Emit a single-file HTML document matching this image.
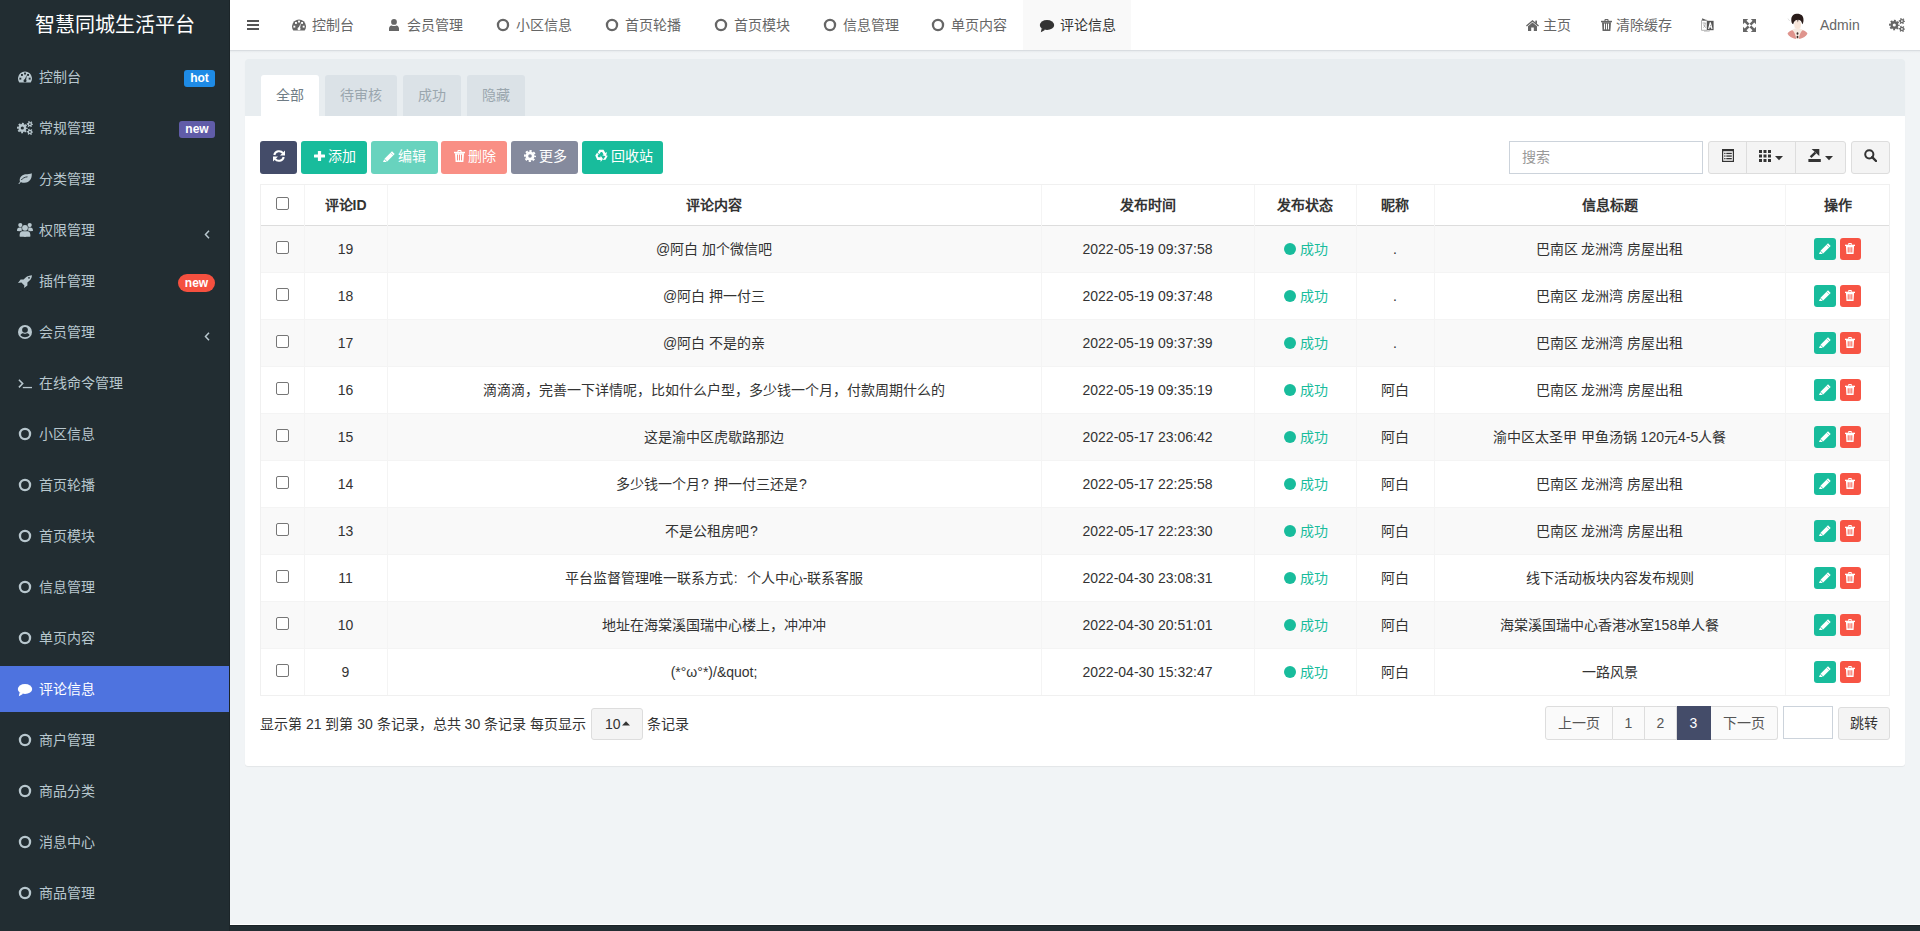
<!DOCTYPE html><html lang="zh-CN"><head><meta charset="utf-8"><title>评论信息</title><style>
*{box-sizing:border-box}
html,body{margin:0;padding:0}
body{width:1920px;height:931px;overflow:hidden;position:relative;background:#222d32;font-family:"Liberation Sans",sans-serif;font-size:14px;color:#333}
.a{position:absolute}
svg{display:block}
#logo{left:0;top:0;width:230px;height:50px;line-height:50px;text-align:center;color:#fff;font-size:20px}
.mi{left:0;width:230px;height:46px;color:#b8c7ce}
.mi .tx{left:39px;top:0;line-height:46px;white-space:nowrap}
.mi.act{background:#4e73df;color:#fff}
.badge{color:#fff;font-weight:bold;font-size:12px;line-height:17px;height:17px;text-align:center;border-radius:3px}
.tx50{top:0;line-height:50px;white-space:nowrap;color:#666}
.tab{top:75px;height:41px;line-height:41px;text-align:center;background:#dbe2e7;color:#9aa6ae;border-radius:3px 3px 0 0}
.tab.act{background:#fff;color:#6f7c85}
.btn{top:141px;height:33px;border-radius:3px}
.btx{top:141px;line-height:31px;color:#fff;white-space:nowrap}
.cell{position:absolute;text-align:center;white-space:nowrap;overflow:hidden;line-height:46px}
.vl{position:absolute;width:1px;background:#f4f4f4}
.hl{position:absolute;height:1px;background:#f4f4f4}
.pg{top:706px;height:34px;line-height:33px;text-align:center;background:#fafafa;color:#555;border:1px solid #ddd;border-left:none}
.fw{display:inline-block;width:14px;text-align:left;padding-left:1px}
.cb{position:absolute;width:13px;height:13px;border:1px solid #767676;border-radius:2px;background:#fff}
</style></head><body>
<div class="a" style="left:0;top:0;width:230px;height:931px;background:#222d32"></div>
<div id="logo" class="a">智慧同城生活平台</div>
<div class="a mi" style="top:54px">
<div class="a" style="left:18px;top:17px"><svg width="14" height="12" viewBox="0 0 14 12"><path d="M1.3 11.6 A7 7 0 1 1 12.7 11.6 Z" fill="#b8c7ce"/><rect x="1.4" y="6.7" width="1.9" height="1.9" fill="#222d32"/><rect x="3.0" y="3.0" width="1.9" height="1.9" fill="#222d32"/><rect x="6.05" y="1.6" width="1.9" height="1.9" fill="#222d32"/><rect x="9.1" y="3.0" width="1.9" height="1.9" fill="#222d32"/><rect x="10.7" y="6.7" width="1.9" height="1.9" fill="#222d32"/><path d="M9.0 3.7 L8.0 9.3 L6.3 9.3 Z" fill="#222d32"/><circle cx="7" cy="9.7" r="1.5" fill="#222d32"/></svg></div><div class="a tx">控制台</div>
<div class="a badge" style="left:184px;top:16px;width:31px;background:#1e8be6">hot</div>
</div>
<div class="a mi" style="top:105px">
<div class="a" style="left:17px;top:16px"><svg width="16" height="14" viewBox="0 0 16 14"><circle cx="5.3" cy="7" r="3.9" fill="#b8c7ce"/><circle cx="5.3" cy="7" r="4.400" fill="none" stroke="#b8c7ce" stroke-width="1.800" stroke-dasharray="1.901 1.555" stroke-dashoffset="0.950"/><circle cx="5.3" cy="7" r="1.6" fill="#222d32"/><circle cx="12.9" cy="3.1" r="2.2" fill="#b8c7ce"/><circle cx="12.9" cy="3.1" r="2.450" fill="none" stroke="#b8c7ce" stroke-width="1.300" stroke-dasharray="1.283 1.283" stroke-dashoffset="0.641"/><circle cx="12.9" cy="3.1" r="0.9" fill="#222d32"/><circle cx="12.9" cy="10.9" r="2.2" fill="#b8c7ce"/><circle cx="12.9" cy="10.9" r="2.450" fill="none" stroke="#b8c7ce" stroke-width="1.300" stroke-dasharray="1.283 1.283" stroke-dashoffset="0.641"/><circle cx="12.9" cy="10.9" r="0.9" fill="#222d32"/></svg></div><div class="a tx">常规管理</div>
<div class="a badge" style="left:179px;top:16px;width:36px;background:#605ca8">new</div>
</div>
<div class="a mi" style="top:156px">
<div class="a" style="left:18px;top:17px"><svg width="14" height="11" viewBox="0 0 14 11"><path d="M0.3 10.6 L2 9 C0.8 5 3.5 1.8 7.5 1.3 C10 1 12 1 13.7 0.2 C14.2 4.5 12.5 9.6 6.5 9.8 C4.5 9.9 3.3 9.5 2.6 9.3 L1.3 10.9 Z" fill="#b8c7ce"/><path d="M3.2 7 C4.5 5.5 6.5 4 9.5 3.8" fill="none" stroke="#222d32" stroke-width="0.9"/></svg></div><div class="a tx">分类管理</div>
</div>
<div class="a mi" style="top:207px">
<div class="a" style="left:17px;top:16px"><svg width="16" height="14" viewBox="0 0 16 14"><circle cx="3.3" cy="2.1" r="2.1" fill="#b8c7ce"/><circle cx="12.7" cy="2.1" r="2.1" fill="#b8c7ce"/><path d="M0 8 C0 5.5 1 4.6 2.6 4.6 L4.8 4.6 C4.5 5.5 4.6 6.6 5.2 7.6 C4.4 7.7 3.5 8 3 8.2 Z" fill="#b8c7ce"/><path d="M16 8 C16 5.5 15 4.6 13.4 4.6 L11.2 4.6 C11.5 5.5 11.4 6.6 10.8 7.6 C11.6 7.7 12.5 8 13 8.2 Z" fill="#b8c7ce"/><circle cx="8" cy="4.8" r="2.9" fill="#b8c7ce"/><path d="M2.6 13.6 C2.5 9.5 3.8 8.3 5.8 8.3 L10.2 8.3 C12.2 8.3 13.5 9.5 13.4 13.6 C12 14 4 14 2.6 13.6 Z" fill="#b8c7ce"/></svg></div><div class="a tx">权限管理</div>
<div class="a" style="left:204px;top:23px"><svg width="6" height="9" viewBox="0 0 6 9"><path d="M5 0.8 L1.5 4.5 L5 8.2" fill="none" stroke="#b8c7ce" stroke-width="1.5"/></svg></div>
</div>
<div class="a mi" style="top:258px">
<div class="a" style="left:18px;top:17px"><svg width="14" height="13" viewBox="0 0 14 13"><path d="M14 0.2 C10 0.3 7.5 2.2 5.6 4.6 L2.6 4.6 L0 7.9 L3.4 7.6 L6.4 10.6 L6 13 L9.4 10.4 L9.4 7.4 C11.9 5.5 13.9 3.5 14 0.2 Z" fill="#b8c7ce"/><circle cx="11" cy="2.8" r="0.9" fill="#222d32"/></svg></div><div class="a tx">插件管理</div>
<div class="a badge" style="left:178px;top:16px;width:37px;background:#f5503f;border-radius:9px;height:18px;line-height:18px;top:16px">new</div>
</div>
<div class="a mi" style="top:309px">
<div class="a" style="left:18px;top:16px"><svg width="14" height="14" viewBox="0 0 14 14"><circle cx="7" cy="7" r="7" fill="#b8c7ce"/><circle cx="7" cy="4.8" r="2.9" fill="#222d32"/><path d="M2.4 10.3 C3 8.6 4 8.2 5.2 8.2 C5.8 8.6 6.4 8.7 7 8.7 C7.6 8.7 8.2 8.6 8.8 8.2 C10 8.2 11 8.6 11.6 10.3 C10.5 11.6 8.8 12.2 7 12.2 C5.2 12.2 3.5 11.6 2.4 10.3 Z" fill="#222d32"/></svg></div><div class="a tx">会员管理</div>
<div class="a" style="left:204px;top:23px"><svg width="6" height="9" viewBox="0 0 6 9"><path d="M5 0.8 L1.5 4.5 L5 8.2" fill="none" stroke="#b8c7ce" stroke-width="1.5"/></svg></div>
</div>
<div class="a mi" style="top:360px">
<div class="a" style="left:18px;top:19px"><svg width="14" height="10" viewBox="0 0 14 10"><path d="M0.9 0.8 L4.7 4.6 L0.9 8.4" fill="none" stroke="#b8c7ce" stroke-width="1.5"/><rect x="4.8" y="7.9" width="9.2" height="1.3" fill="#b8c7ce"/></svg></div><div class="a tx">在线命令管理</div>
</div>
<div class="a mi" style="top:411px">
<div class="a" style="left:18px;top:16px"><svg width="14" height="14" viewBox="0 0 14 14"><circle cx="7" cy="7" r="5.05" fill="none" stroke="#b8c7ce" stroke-width="2.3"/></svg></div><div class="a tx">小区信息</div>
</div>
<div class="a mi" style="top:462px">
<div class="a" style="left:18px;top:16px"><svg width="14" height="14" viewBox="0 0 14 14"><circle cx="7" cy="7" r="5.05" fill="none" stroke="#b8c7ce" stroke-width="2.3"/></svg></div><div class="a tx">首页轮播</div>
</div>
<div class="a mi" style="top:513px">
<div class="a" style="left:18px;top:16px"><svg width="14" height="14" viewBox="0 0 14 14"><circle cx="7" cy="7" r="5.05" fill="none" stroke="#b8c7ce" stroke-width="2.3"/></svg></div><div class="a tx">首页模块</div>
</div>
<div class="a mi" style="top:564px">
<div class="a" style="left:18px;top:16px"><svg width="14" height="14" viewBox="0 0 14 14"><circle cx="7" cy="7" r="5.05" fill="none" stroke="#b8c7ce" stroke-width="2.3"/></svg></div><div class="a tx">信息管理</div>
</div>
<div class="a mi" style="top:615px">
<div class="a" style="left:18px;top:16px"><svg width="14" height="14" viewBox="0 0 14 14"><circle cx="7" cy="7" r="5.05" fill="none" stroke="#b8c7ce" stroke-width="2.3"/></svg></div><div class="a tx">单页内容</div>
</div>
<div class="a mi act" style="top:666px">
<div class="a" style="left:17px;top:17px"><svg width="16" height="14" viewBox="0 0 16 14"><ellipse cx="8" cy="6" rx="7.2" ry="5.1" fill="#fff"/><path d="M2.8 9 L1.8 13.2 C3.6 12.6 5 11.8 6.2 10.8 Z" fill="#fff"/></svg></div><div class="a tx">评论信息</div>
</div>
<div class="a mi" style="top:717px">
<div class="a" style="left:18px;top:16px"><svg width="14" height="14" viewBox="0 0 14 14"><circle cx="7" cy="7" r="5.05" fill="none" stroke="#b8c7ce" stroke-width="2.3"/></svg></div><div class="a tx">商户管理</div>
</div>
<div class="a mi" style="top:768px">
<div class="a" style="left:18px;top:16px"><svg width="14" height="14" viewBox="0 0 14 14"><circle cx="7" cy="7" r="5.05" fill="none" stroke="#b8c7ce" stroke-width="2.3"/></svg></div><div class="a tx">商品分类</div>
</div>
<div class="a mi" style="top:819px">
<div class="a" style="left:18px;top:16px"><svg width="14" height="14" viewBox="0 0 14 14"><circle cx="7" cy="7" r="5.05" fill="none" stroke="#b8c7ce" stroke-width="2.3"/></svg></div><div class="a tx">消息中心</div>
</div>
<div class="a mi" style="top:870px">
<div class="a" style="left:18px;top:16px"><svg width="14" height="14" viewBox="0 0 14 14"><circle cx="7" cy="7" r="5.05" fill="none" stroke="#b8c7ce" stroke-width="2.3"/></svg></div><div class="a tx">商品管理</div>
</div>
<div class="a" style="left:229px;top:0;width:1px;height:931px;background:#1c2529"></div>
<div class="a" style="left:230px;top:0;width:1690px;height:50px;background:#fff"></div>
<div class="a" style="left:247px;top:20px"><svg width="12" height="10" viewBox="0 0 12 10"><rect x="0" y="0" width="12" height="2" fill="#555"/><rect x="0" y="4" width="12" height="2" fill="#555"/><rect x="0" y="8" width="12" height="2" fill="#555"/></svg></div>
<div class="a" style="left:292px;top:19px"><svg width="14" height="12" viewBox="0 0 14 12"><path d="M1.3 11.6 A7 7 0 1 1 12.7 11.6 Z" fill="#666"/><rect x="1.4" y="6.7" width="1.9" height="1.9" fill="#fff"/><rect x="3.0" y="3.0" width="1.9" height="1.9" fill="#fff"/><rect x="6.05" y="1.6" width="1.9" height="1.9" fill="#fff"/><rect x="9.1" y="3.0" width="1.9" height="1.9" fill="#fff"/><rect x="10.7" y="6.7" width="1.9" height="1.9" fill="#fff"/><path d="M9.0 3.7 L8.0 9.3 L6.3 9.3 Z" fill="#fff"/><circle cx="7" cy="9.7" r="1.5" fill="#fff"/></svg></div>
<div class="a tx50" style="left:312px;">控制台</div>
<div class="a" style="left:389px;top:19px"><svg width="10" height="12" viewBox="0 0 10 12"><circle cx="5" cy="2.9" r="2.9" fill="#666"/><path d="M0 12 L0 9.6 C0 7.7 1.1 6.6 2.6 6.4 C3.3 6.9 4.1 7.1 5 7.1 C5.9 7.1 6.7 6.9 7.4 6.4 C8.9 6.6 10 7.7 10 9.6 L10 12 Z" fill="#666"/></svg></div>
<div class="a tx50" style="left:407px;">会员管理</div>
<div class="a" style="left:496px;top:18px"><svg width="14" height="14" viewBox="0 0 14 14"><circle cx="7" cy="7" r="5.05" fill="none" stroke="#666" stroke-width="2.3"/></svg></div>
<div class="a tx50" style="left:516px;">小区信息</div>
<div class="a" style="left:605px;top:18px"><svg width="14" height="14" viewBox="0 0 14 14"><circle cx="7" cy="7" r="5.05" fill="none" stroke="#666" stroke-width="2.3"/></svg></div>
<div class="a tx50" style="left:625px;">首页轮播</div>
<div class="a" style="left:714px;top:18px"><svg width="14" height="14" viewBox="0 0 14 14"><circle cx="7" cy="7" r="5.05" fill="none" stroke="#666" stroke-width="2.3"/></svg></div>
<div class="a tx50" style="left:734px;">首页模块</div>
<div class="a" style="left:823px;top:18px"><svg width="14" height="14" viewBox="0 0 14 14"><circle cx="7" cy="7" r="5.05" fill="none" stroke="#666" stroke-width="2.3"/></svg></div>
<div class="a tx50" style="left:843px;">信息管理</div>
<div class="a" style="left:931px;top:18px"><svg width="14" height="14" viewBox="0 0 14 14"><circle cx="7" cy="7" r="5.05" fill="none" stroke="#666" stroke-width="2.3"/></svg></div>
<div class="a tx50" style="left:951px;">单页内容</div>
<div class="a" style="left:1023px;top:0;width:108px;height:50px;background:#f9f9f9"></div>
<div class="a" style="left:1039px;top:19px"><svg width="16" height="14" viewBox="0 0 16 14"><ellipse cx="8" cy="6" rx="7.2" ry="5.1" fill="#333"/><path d="M2.8 9 L1.8 13.2 C3.6 12.6 5 11.8 6.2 10.8 Z" fill="#333"/></svg></div>
<div class="a tx50" style="left:1060px;color:#333">评论信息</div>
<div class="a" style="left:1526px;top:20px"><svg width="13" height="11" viewBox="0 0 13 11"><path d="M6.5 0 L13 5.5 L12.1 6.5 L6.5 1.8 L0.9 6.5 L0 5.5 Z" fill="#666"/><path d="M2 6.2 L6.5 2.5 L11 6.2 L11 11 L7.8 11 L7.8 7.6 L5.2 7.6 L5.2 11 L2 11 Z" fill="#666"/><rect x="9.3" y="0.6" width="1.7" height="3.2" fill="#666"/></svg></div>
<div class="a tx50" style="left:1543px">主页</div>
<div class="a" style="left:1601px;top:19px"><svg width="11" height="12" viewBox="0 0 11 12"><rect x="0" y="1.8" width="11" height="1.5" fill="#666"/><path d="M3.3 2 L3.8 0 L7.2 0 L7.7 2 L6.6 2 L6.3 1 L4.7 1 L4.4 2 Z" fill="#666"/><path d="M1 3.3 L10 3.3 L9.4 12 L1.6 12 Z" fill="#666"/><rect x="3" y="4.6" width="1" height="5.8" fill="#fff"/><rect x="5" y="4.6" width="1" height="5.8" fill="#fff"/><rect x="7" y="4.6" width="1" height="5.8" fill="#fff"/></svg></div>
<div class="a tx50" style="left:1616px">清除缓存</div>
<div class="a" style="left:1701px;top:18px"><svg width="13" height="14" viewBox="0 0 13 14"><path d="M0.5 2.2 L6 2.2 L6 12.3 L0.5 12.3 Z" fill="#fff" stroke="#aaa" stroke-width="0.9"/><path d="M6 2.8 L12.6 2.8 L12.6 12.2 L6 12.2 Z" fill="#555"/><path d="M7.6 11 L9.3 4.4 L11 11 M8.2 8.9 L10.4 8.9" stroke="#fff" stroke-width="1.1" fill="none"/><path d="M1.6 5 L4.6 5 M2.5 9.5 C3.8 8.5 4.2 7 4.2 5 M2.6 6.5 C3 8 4 9 5 9.6" stroke="#999" stroke-width="0.8" fill="none"/><path d="M1.2 0.2 L6 2.6 L1.2 2.6 Z" fill="#555"/><path d="M3 13.2 L8.4 13.2 L8.4 12.2" stroke="#aaa" stroke-width="0.7" fill="none"/></svg></div>
<div class="a" style="left:1743px;top:19px"><svg width="13" height="13" viewBox="0 0 13 13"><path d="M0 0 L5.2 0 L3.5 1.7 L6.5 4.7 L4.7 6.5 L1.7 3.5 L0 5.2 Z M13 0 L13 5.2 L11.3 3.5 L8.3 6.5 L6.5 4.7 L9.5 1.7 L7.8 0 Z M0 13 L0 7.8 L1.7 9.5 L4.7 6.5 L6.5 8.3 L3.5 11.3 L5.2 13 Z M13 13 L7.8 13 L9.5 11.3 L6.5 8.3 L8.3 6.5 L11.3 9.5 L13 7.8 Z" fill="#666"/></svg></div>
<div class="a" style="left:1785px;top:13px;width:25px;height:26px;border-radius:50%;overflow:hidden"><svg width="25" height="26" viewBox="0 0 25 26"><g><path d="M6 18 C8 15.8 10 15.2 12.5 15.2 C15 15.2 17 15.8 19 18 L17 26 L8 26 Z" fill="#f6ebe2"/><path d="M1.2 26 C1.2 21 3.5 18 7.5 17.3 C9 18.5 10.5 21 11.2 26 Z" fill="#df948d"/><path d="M23.8 26 C23.8 21 21.5 18 17.5 17.3 C16 18.5 14.5 21 13.8 26 Z" fill="#df948d"/><ellipse cx="12.6" cy="11.5" rx="3.4" ry="4.6" fill="#f8e6da"/><path d="M6.3 7.5 C6 2.5 9 0.8 12.4 0.8 C16 0.8 18.8 2.8 18.5 7.5 C18.4 9.5 17.8 10.8 17.2 11.2 C16.8 8.5 15.6 7.2 13.4 6.8 L12.9 9.5 L12.3 6.8 C10 7.2 8.8 8.8 8.2 11.2 C7 10.8 6.4 9.5 6.3 7.5 Z" fill="#2a1c1a"/><ellipse cx="12.5" cy="20.5" rx="0.9" ry="1.3" fill="#3a2a26"/><ellipse cx="12.5" cy="24" rx="0.9" ry="1.3" fill="#3a2a26"/><path d="M2.8 5.5 L4.8 8" stroke="#cfcfcf" stroke-width="0.6"/></g></svg></div>
<div class="a tx50" style="left:1820px">Admin</div>
<div class="a" style="left:1889px;top:18px"><svg width="16" height="14" viewBox="0 0 16 14"><circle cx="5.3" cy="7" r="3.9" fill="#666"/><circle cx="5.3" cy="7" r="4.400" fill="none" stroke="#666" stroke-width="1.800" stroke-dasharray="1.901 1.555" stroke-dashoffset="0.950"/><circle cx="5.3" cy="7" r="1.6" fill="#fff"/><circle cx="12.9" cy="3.1" r="2.2" fill="#666"/><circle cx="12.9" cy="3.1" r="2.450" fill="none" stroke="#666" stroke-width="1.300" stroke-dasharray="1.283 1.283" stroke-dashoffset="0.641"/><circle cx="12.9" cy="3.1" r="0.9" fill="#fff"/><circle cx="12.9" cy="10.9" r="2.2" fill="#666"/><circle cx="12.9" cy="10.9" r="2.450" fill="none" stroke="#666" stroke-width="1.300" stroke-dasharray="1.283 1.283" stroke-dashoffset="0.641"/><circle cx="12.9" cy="10.9" r="0.9" fill="#fff"/></svg></div>
<div class="a" style="left:230px;top:50px;width:1690px;height:1px;background:#d9dde1"></div>
<div class="a" style="left:230px;top:51px;width:1690px;height:873px;background:#f1f4f6"></div>
<div class="a" style="left:230px;top:51px;width:1690px;height:2px;background:linear-gradient(#e6eaed,#f1f4f6)"></div>
<div class="a" style="left:230px;top:924px;width:1690px;height:1px;background:#fff"></div>
<div class="a" style="left:230px;top:925px;width:1690px;height:1px;background:#1a2226"></div>
<div class="a" style="left:245px;top:59px;width:1660px;height:707px;background:#fff;border-radius:3px;box-shadow:0 1px 1px rgba(0,0,0,.06)"></div>
<div class="a" style="left:245px;top:59px;width:1660px;height:57px;background:#e8edf0;border-radius:3px 3px 0 0"></div>
<div class="a tab act" style="left:261px;width:58px">全部</div>
<div class="a tab" style="left:325px;width:72px">待审核</div>
<div class="a tab" style="left:403px;width:58px">成功</div>
<div class="a tab" style="left:467px;width:58px">隐藏</div>
<div class="a" style="left:260px;top:141px;width:37px;height:33px;opacity:1">
<div class="a btn" style="left:0;top:0;width:37px;background:#444c69"></div>
<div class="a" style="left:13px;top:9px"><svg width="12" height="12" viewBox="0 0 12 12"><path d="M10 3.2 A4.9 4.9 0 0 0 1.3 5" fill="none" stroke="#fff" stroke-width="2.1"/><path d="M12 0.4 L12 5.4 L7 5.4 Z" fill="#fff"/><path d="M2 8.8 A4.9 4.9 0 0 0 10.7 7" fill="none" stroke="#fff" stroke-width="2.1"/><path d="M0 11.6 L0 6.6 L5 6.6 Z" fill="#fff"/></svg></div>
</div>
<div class="a" style="left:301px;top:141px;width:66px;height:33px;opacity:1">
<div class="a btn" style="left:0;top:0;width:66px;background:#18bc9c"></div>
<div class="a" style="left:13px;top:10px"><svg width="11" height="10" viewBox="0 0 11 10"><rect x="3.9" y="0" width="3.2" height="10" rx="0.5" fill="#fff"/><rect x="0" y="3.4" width="11" height="3.2" rx="0.5" fill="#fff"/></svg></div>
<div class="a btx" style="left:27px;top:0">添加</div>
</div>
<div class="a" style="left:371px;top:141px;width:67px;height:33px;opacity:0.65">
<div class="a btn" style="left:0;top:0;width:67px;background:#18bc9c"></div>
<div class="a" style="left:12px;top:10px"><svg width="12" height="11" viewBox="0 0 12 11"><path d="M9 0.3 L11.7 3 L4.2 10.5 L1.5 7.8 Z" fill="#fff"/><path d="M1.2 8.3 L3.8 10.9 L0 11 Z" fill="#fff"/><path d="M7.6 1.7 L10.3 4.4" stroke="#18bc9c" stroke-width="0.5"/></svg></div>
<div class="a btx" style="left:27px;top:0">编辑</div>
</div>
<div class="a" style="left:441px;top:141px;width:66px;height:33px;opacity:0.65">
<div class="a btn" style="left:0;top:0;width:66px;background:#f75444"></div>
<div class="a" style="left:13px;top:9px"><svg width="11" height="12" viewBox="0 0 11 12"><rect x="0" y="1.8" width="11" height="1.5" fill="#fff"/><path d="M3.3 2 L3.8 0 L7.2 0 L7.7 2 L6.6 2 L6.3 1 L4.7 1 L4.4 2 Z" fill="#fff"/><path d="M1 3.3 L10 3.3 L9.4 12 L1.6 12 Z" fill="#fff"/><rect x="3" y="4.6" width="1" height="5.8" fill="#f75444"/><rect x="5" y="4.6" width="1" height="5.8" fill="#f75444"/><rect x="7" y="4.6" width="1" height="5.8" fill="#f75444"/></svg></div>
<div class="a btx" style="left:27px;top:0">删除</div>
</div>
<div class="a" style="left:511px;top:141px;width:67px;height:33px;opacity:0.65">
<div class="a btn" style="left:0;top:0;width:67px;background:#444c69"></div>
<div class="a" style="left:13px;top:9px"><svg width="12" height="12" viewBox="0 0 12 12"><circle cx="6" cy="6" r="4.5" fill="#fff"/><circle cx="6" cy="6" r="5.050" fill="none" stroke="#fff" stroke-width="1.900" stroke-dasharray="2.181 1.785" stroke-dashoffset="1.091"/><circle cx="6" cy="6" r="1.8" fill="#444c69"/></svg></div>
<div class="a btx" style="left:28px;top:0">更多</div>
</div>
<div class="a" style="left:582px;top:141px;width:81px;height:33px;opacity:1">
<div class="a btn" style="left:0;top:0;width:81px;background:#18bc9c"></div>
<div class="a" style="left:13px;top:8px"><svg width="13" height="13" viewBox="0 0 13 13"><path d="M4.3 0.8 L8.5 0.8 L10.4 4 L12 3.1 L11 7.2 L7.1 6.3 L8.6 5.4 L7.1 2.9 L5.8 2.9 L4.6 4.9 L2.7 3.8 Z" fill="#fff"/><path d="M0.3 6.6 L1.9 3.9 L3.8 5 L2.6 7 L3.4 8.3 L5.6 8.3 L5.6 6.6 L8 10 L5.6 13 L5.6 11 L2.3 11 Z" fill="#fff"/><path d="M12.7 6.8 L10.6 10.8 L7.8 11 L9.6 8.6 L10.5 7 L9 6 Z" fill="#fff"/></svg></div>
<div class="a btx" style="left:29px;top:0">回收站</div>
</div>
<div class="a" style="left:1509px;top:141px;width:194px;height:33px;border:1px solid #ccd3db;background:#fff"></div>
<div class="a" style="left:1522px;top:141px;line-height:32px;color:#999">搜索</div>
<div class="a" style="left:1708px;top:141px;width:138px;height:33px;border:1px solid #ddd;border-radius:3px;background:#f4f4f4"></div>
<div class="a" style="left:1746px;top:142px;width:1px;height:31px;background:#ddd"></div>
<div class="a" style="left:1795px;top:142px;width:1px;height:31px;background:#ddd"></div>
<div class="a" style="left:1722px;top:149px"><svg width="12" height="13" viewBox="0 0 12 13"><rect x="0.6" y="0.6" width="10.8" height="11.8" fill="none" stroke="#333" stroke-width="1.2"/><rect x="0.6" y="0.6" width="10.8" height="1.6" fill="#333"/><rect x="2.2" y="3.8" width="1.3" height="1.3" fill="#333"/><rect x="4.3" y="3.8" width="5.5" height="1.3" fill="#333"/><rect x="2.2" y="6.4" width="1.3" height="1.3" fill="#333"/><rect x="4.3" y="6.4" width="5.5" height="1.3" fill="#333"/><rect x="2.2" y="9" width="1.3" height="1.3" fill="#333"/><rect x="4.3" y="9" width="5.5" height="1.3" fill="#333"/></svg></div>
<div class="a" style="left:1759px;top:150px"><svg width="12" height="12" viewBox="0 0 12 12"><rect x="0" y="0" width="3" height="3" fill="#333"/><rect x="4.5" y="0" width="3" height="3" fill="#333"/><rect x="9" y="0" width="3" height="3" fill="#333"/><rect x="0" y="4.5" width="3" height="3" fill="#333"/><rect x="4.5" y="4.5" width="3" height="3" fill="#333"/><rect x="9" y="4.5" width="3" height="3" fill="#333"/><rect x="0" y="9" width="3" height="3" fill="#333"/><rect x="4.5" y="9" width="3" height="3" fill="#333"/><rect x="9" y="9" width="3" height="3" fill="#333"/></svg></div>
<div class="a" style="left:1775px;top:156px"><svg width="8" height="5" viewBox="0 0 8 5"><path d="M0 0 L8 0 L4 4.2 Z" fill="#333"/></svg></div>
<div class="a" style="left:1808px;top:148px"><svg width="13" height="14" viewBox="0 0 13 14"><rect x="0.4" y="11" width="12.4" height="3" fill="#333"/><path d="M3.6 0.9 L11.3 0.9 L11.3 8 Z" fill="#333"/><path d="M2.6 9.2 L7.4 4.6" stroke="#333" stroke-width="2.4"/></svg></div>
<div class="a" style="left:1825px;top:156px"><svg width="8" height="5" viewBox="0 0 8 5"><path d="M0 0 L8 0 L4 4.2 Z" fill="#333"/></svg></div>
<div class="a" style="left:1851px;top:141px;width:39px;height:33px;border:1px solid #ddd;border-radius:3px;background:#f4f4f4"></div>
<div class="a" style="left:1864px;top:149px"><svg width="13" height="13" viewBox="0 0 13 13"><circle cx="5.3" cy="5.3" r="4.1" fill="none" stroke="#333" stroke-width="2"/><path d="M8.2 8.2 L12 12" stroke="#333" stroke-width="2.4" stroke-linecap="round"/></svg></div>
<div class="a" style="left:260px;top:184px;width:1630px;height:512px;border:1px solid #f0f0f0;background:#fff"></div>
<div class="a" style="left:261px;top:226px;width:1628px;height:46px;background:#f9f9f9"></div>
<div class="hl" style="left:261px;top:272px;width:1628px"></div>
<div class="hl" style="left:261px;top:319px;width:1628px"></div>
<div class="a" style="left:261px;top:320px;width:1628px;height:46px;background:#f9f9f9"></div>
<div class="hl" style="left:261px;top:366px;width:1628px"></div>
<div class="hl" style="left:261px;top:413px;width:1628px"></div>
<div class="a" style="left:261px;top:414px;width:1628px;height:46px;background:#f9f9f9"></div>
<div class="hl" style="left:261px;top:460px;width:1628px"></div>
<div class="hl" style="left:261px;top:507px;width:1628px"></div>
<div class="a" style="left:261px;top:508px;width:1628px;height:46px;background:#f9f9f9"></div>
<div class="hl" style="left:261px;top:554px;width:1628px"></div>
<div class="hl" style="left:261px;top:601px;width:1628px"></div>
<div class="a" style="left:261px;top:602px;width:1628px;height:46px;background:#f9f9f9"></div>
<div class="hl" style="left:261px;top:648px;width:1628px"></div>
<div class="hl" style="left:261px;top:225px;width:1628px;background:#ddd"></div>
<div class="vl" style="left:304px;top:185px;height:510px"></div>
<div class="vl" style="left:387px;top:185px;height:510px"></div>
<div class="vl" style="left:1041px;top:185px;height:510px"></div>
<div class="vl" style="left:1254px;top:185px;height:510px"></div>
<div class="vl" style="left:1356px;top:185px;height:510px"></div>
<div class="vl" style="left:1434px;top:185px;height:510px"></div>
<div class="vl" style="left:1785px;top:185px;height:510px"></div>
<div class="cb" style="left:276px;top:197px"></div>
<div class="cell" style="left:304px;top:185px;width:83px;line-height:40px;font-weight:bold">评论ID</div>
<div class="cell" style="left:387px;top:185px;width:654px;line-height:40px;font-weight:bold">评论内容</div>
<div class="cell" style="left:1041px;top:185px;width:213px;line-height:40px;font-weight:bold">发布时间</div>
<div class="cell" style="left:1254px;top:185px;width:102px;line-height:40px;font-weight:bold">发布状态</div>
<div class="cell" style="left:1356px;top:185px;width:78px;line-height:40px;font-weight:bold">昵称</div>
<div class="cell" style="left:1434px;top:185px;width:351px;line-height:40px;font-weight:bold">信息标题</div>
<div class="cell" style="left:1785px;top:185px;width:105px;line-height:40px;font-weight:bold">操作</div>
<div class="cb" style="left:276px;top:241px"></div>
<div class="cell" style="left:304px;top:226px;width:83px">19</div>
<div class="cell" style="left:387px;top:226px;width:654px">@阿白 加个微信吧</div>
<div class="cell" style="left:1041px;top:226px;width:213px">2022-05-19 09:37:58</div>
<div class="cell" style="left:1356px;top:226px;width:78px">.</div>
<div class="cell" style="left:1434px;top:226px;width:351px">巴南区 龙洲湾 房屋出租</div>
<div class="a" style="left:1284px;top:243px"><svg width="12" height="12" viewBox="0 0 12 12"><circle cx="6" cy="6" r="6" fill="#18bc9c"/></svg></div>
<div class="a" style="left:1300px;top:226px;line-height:46px;color:#18bc9c">成功</div>
<div class="a" style="left:1814px;top:238px;width:22px;height:22px;background:#18bc9c;border-radius:3px"></div>
<div class="a" style="left:1819px;top:243px"><svg width="12" height="11" viewBox="0 0 12 11"><path d="M9 0.3 L11.7 3 L4.2 10.5 L1.5 7.8 Z" fill="#fff"/><path d="M1.2 8.3 L3.8 10.9 L0 11 Z" fill="#fff"/><path d="M7.6 1.7 L10.3 4.4" stroke="#18bc9c" stroke-width="0.5"/></svg></div>
<div class="a" style="left:1840px;top:238px;width:21px;height:22px;background:#f75444;border-radius:3px"></div>
<div class="a" style="left:1845px;top:243px"><svg width="10" height="11" viewBox="0 0 11 12"><rect x="0" y="1.8" width="11" height="1.5" fill="#fff"/><path d="M3.3 2 L3.8 0 L7.2 0 L7.7 2 L6.6 2 L6.3 1 L4.7 1 L4.4 2 Z" fill="#fff"/><path d="M1 3.3 L10 3.3 L9.4 12 L1.6 12 Z" fill="#fff"/><rect x="3" y="4.6" width="1" height="5.8" fill="#f75444"/><rect x="5" y="4.6" width="1" height="5.8" fill="#f75444"/><rect x="7" y="4.6" width="1" height="5.8" fill="#f75444"/></svg></div>
<div class="cb" style="left:276px;top:288px"></div>
<div class="cell" style="left:304px;top:273px;width:83px">18</div>
<div class="cell" style="left:387px;top:273px;width:654px">@阿白 押一付三</div>
<div class="cell" style="left:1041px;top:273px;width:213px">2022-05-19 09:37:48</div>
<div class="cell" style="left:1356px;top:273px;width:78px">.</div>
<div class="cell" style="left:1434px;top:273px;width:351px">巴南区 龙洲湾 房屋出租</div>
<div class="a" style="left:1284px;top:290px"><svg width="12" height="12" viewBox="0 0 12 12"><circle cx="6" cy="6" r="6" fill="#18bc9c"/></svg></div>
<div class="a" style="left:1300px;top:273px;line-height:46px;color:#18bc9c">成功</div>
<div class="a" style="left:1814px;top:285px;width:22px;height:22px;background:#18bc9c;border-radius:3px"></div>
<div class="a" style="left:1819px;top:290px"><svg width="12" height="11" viewBox="0 0 12 11"><path d="M9 0.3 L11.7 3 L4.2 10.5 L1.5 7.8 Z" fill="#fff"/><path d="M1.2 8.3 L3.8 10.9 L0 11 Z" fill="#fff"/><path d="M7.6 1.7 L10.3 4.4" stroke="#18bc9c" stroke-width="0.5"/></svg></div>
<div class="a" style="left:1840px;top:285px;width:21px;height:22px;background:#f75444;border-radius:3px"></div>
<div class="a" style="left:1845px;top:290px"><svg width="10" height="11" viewBox="0 0 11 12"><rect x="0" y="1.8" width="11" height="1.5" fill="#fff"/><path d="M3.3 2 L3.8 0 L7.2 0 L7.7 2 L6.6 2 L6.3 1 L4.7 1 L4.4 2 Z" fill="#fff"/><path d="M1 3.3 L10 3.3 L9.4 12 L1.6 12 Z" fill="#fff"/><rect x="3" y="4.6" width="1" height="5.8" fill="#f75444"/><rect x="5" y="4.6" width="1" height="5.8" fill="#f75444"/><rect x="7" y="4.6" width="1" height="5.8" fill="#f75444"/></svg></div>
<div class="cb" style="left:276px;top:335px"></div>
<div class="cell" style="left:304px;top:320px;width:83px">17</div>
<div class="cell" style="left:387px;top:320px;width:654px">@阿白 不是的亲</div>
<div class="cell" style="left:1041px;top:320px;width:213px">2022-05-19 09:37:39</div>
<div class="cell" style="left:1356px;top:320px;width:78px">.</div>
<div class="cell" style="left:1434px;top:320px;width:351px">巴南区 龙洲湾 房屋出租</div>
<div class="a" style="left:1284px;top:337px"><svg width="12" height="12" viewBox="0 0 12 12"><circle cx="6" cy="6" r="6" fill="#18bc9c"/></svg></div>
<div class="a" style="left:1300px;top:320px;line-height:46px;color:#18bc9c">成功</div>
<div class="a" style="left:1814px;top:332px;width:22px;height:22px;background:#18bc9c;border-radius:3px"></div>
<div class="a" style="left:1819px;top:337px"><svg width="12" height="11" viewBox="0 0 12 11"><path d="M9 0.3 L11.7 3 L4.2 10.5 L1.5 7.8 Z" fill="#fff"/><path d="M1.2 8.3 L3.8 10.9 L0 11 Z" fill="#fff"/><path d="M7.6 1.7 L10.3 4.4" stroke="#18bc9c" stroke-width="0.5"/></svg></div>
<div class="a" style="left:1840px;top:332px;width:21px;height:22px;background:#f75444;border-radius:3px"></div>
<div class="a" style="left:1845px;top:337px"><svg width="10" height="11" viewBox="0 0 11 12"><rect x="0" y="1.8" width="11" height="1.5" fill="#fff"/><path d="M3.3 2 L3.8 0 L7.2 0 L7.7 2 L6.6 2 L6.3 1 L4.7 1 L4.4 2 Z" fill="#fff"/><path d="M1 3.3 L10 3.3 L9.4 12 L1.6 12 Z" fill="#fff"/><rect x="3" y="4.6" width="1" height="5.8" fill="#f75444"/><rect x="5" y="4.6" width="1" height="5.8" fill="#f75444"/><rect x="7" y="4.6" width="1" height="5.8" fill="#f75444"/></svg></div>
<div class="cb" style="left:276px;top:382px"></div>
<div class="cell" style="left:304px;top:367px;width:83px">16</div>
<div class="cell" style="left:387px;top:367px;width:654px">滴滴滴，完善一下详情呢，比如什么户型，多少钱一个月，付款周期什么的</div>
<div class="cell" style="left:1041px;top:367px;width:213px">2022-05-19 09:35:19</div>
<div class="cell" style="left:1356px;top:367px;width:78px">阿白</div>
<div class="cell" style="left:1434px;top:367px;width:351px">巴南区 龙洲湾 房屋出租</div>
<div class="a" style="left:1284px;top:384px"><svg width="12" height="12" viewBox="0 0 12 12"><circle cx="6" cy="6" r="6" fill="#18bc9c"/></svg></div>
<div class="a" style="left:1300px;top:367px;line-height:46px;color:#18bc9c">成功</div>
<div class="a" style="left:1814px;top:379px;width:22px;height:22px;background:#18bc9c;border-radius:3px"></div>
<div class="a" style="left:1819px;top:384px"><svg width="12" height="11" viewBox="0 0 12 11"><path d="M9 0.3 L11.7 3 L4.2 10.5 L1.5 7.8 Z" fill="#fff"/><path d="M1.2 8.3 L3.8 10.9 L0 11 Z" fill="#fff"/><path d="M7.6 1.7 L10.3 4.4" stroke="#18bc9c" stroke-width="0.5"/></svg></div>
<div class="a" style="left:1840px;top:379px;width:21px;height:22px;background:#f75444;border-radius:3px"></div>
<div class="a" style="left:1845px;top:384px"><svg width="10" height="11" viewBox="0 0 11 12"><rect x="0" y="1.8" width="11" height="1.5" fill="#fff"/><path d="M3.3 2 L3.8 0 L7.2 0 L7.7 2 L6.6 2 L6.3 1 L4.7 1 L4.4 2 Z" fill="#fff"/><path d="M1 3.3 L10 3.3 L9.4 12 L1.6 12 Z" fill="#fff"/><rect x="3" y="4.6" width="1" height="5.8" fill="#f75444"/><rect x="5" y="4.6" width="1" height="5.8" fill="#f75444"/><rect x="7" y="4.6" width="1" height="5.8" fill="#f75444"/></svg></div>
<div class="cb" style="left:276px;top:429px"></div>
<div class="cell" style="left:304px;top:414px;width:83px">15</div>
<div class="cell" style="left:387px;top:414px;width:654px">这是渝中区虎歇路那边</div>
<div class="cell" style="left:1041px;top:414px;width:213px">2022-05-17 23:06:42</div>
<div class="cell" style="left:1356px;top:414px;width:78px">阿白</div>
<div class="cell" style="left:1434px;top:414px;width:351px">渝中区太圣甲 甲鱼汤锅 120元4-5人餐</div>
<div class="a" style="left:1284px;top:431px"><svg width="12" height="12" viewBox="0 0 12 12"><circle cx="6" cy="6" r="6" fill="#18bc9c"/></svg></div>
<div class="a" style="left:1300px;top:414px;line-height:46px;color:#18bc9c">成功</div>
<div class="a" style="left:1814px;top:426px;width:22px;height:22px;background:#18bc9c;border-radius:3px"></div>
<div class="a" style="left:1819px;top:431px"><svg width="12" height="11" viewBox="0 0 12 11"><path d="M9 0.3 L11.7 3 L4.2 10.5 L1.5 7.8 Z" fill="#fff"/><path d="M1.2 8.3 L3.8 10.9 L0 11 Z" fill="#fff"/><path d="M7.6 1.7 L10.3 4.4" stroke="#18bc9c" stroke-width="0.5"/></svg></div>
<div class="a" style="left:1840px;top:426px;width:21px;height:22px;background:#f75444;border-radius:3px"></div>
<div class="a" style="left:1845px;top:431px"><svg width="10" height="11" viewBox="0 0 11 12"><rect x="0" y="1.8" width="11" height="1.5" fill="#fff"/><path d="M3.3 2 L3.8 0 L7.2 0 L7.7 2 L6.6 2 L6.3 1 L4.7 1 L4.4 2 Z" fill="#fff"/><path d="M1 3.3 L10 3.3 L9.4 12 L1.6 12 Z" fill="#fff"/><rect x="3" y="4.6" width="1" height="5.8" fill="#f75444"/><rect x="5" y="4.6" width="1" height="5.8" fill="#f75444"/><rect x="7" y="4.6" width="1" height="5.8" fill="#f75444"/></svg></div>
<div class="cb" style="left:276px;top:476px"></div>
<div class="cell" style="left:304px;top:461px;width:83px">14</div>
<div class="cell" style="left:387px;top:461px;width:654px">多少钱一个月<span class="fw">?</span>押一付三还是<span class="fw">?</span></div>
<div class="cell" style="left:1041px;top:461px;width:213px">2022-05-17 22:25:58</div>
<div class="cell" style="left:1356px;top:461px;width:78px">阿白</div>
<div class="cell" style="left:1434px;top:461px;width:351px">巴南区 龙洲湾 房屋出租</div>
<div class="a" style="left:1284px;top:478px"><svg width="12" height="12" viewBox="0 0 12 12"><circle cx="6" cy="6" r="6" fill="#18bc9c"/></svg></div>
<div class="a" style="left:1300px;top:461px;line-height:46px;color:#18bc9c">成功</div>
<div class="a" style="left:1814px;top:473px;width:22px;height:22px;background:#18bc9c;border-radius:3px"></div>
<div class="a" style="left:1819px;top:478px"><svg width="12" height="11" viewBox="0 0 12 11"><path d="M9 0.3 L11.7 3 L4.2 10.5 L1.5 7.8 Z" fill="#fff"/><path d="M1.2 8.3 L3.8 10.9 L0 11 Z" fill="#fff"/><path d="M7.6 1.7 L10.3 4.4" stroke="#18bc9c" stroke-width="0.5"/></svg></div>
<div class="a" style="left:1840px;top:473px;width:21px;height:22px;background:#f75444;border-radius:3px"></div>
<div class="a" style="left:1845px;top:478px"><svg width="10" height="11" viewBox="0 0 11 12"><rect x="0" y="1.8" width="11" height="1.5" fill="#fff"/><path d="M3.3 2 L3.8 0 L7.2 0 L7.7 2 L6.6 2 L6.3 1 L4.7 1 L4.4 2 Z" fill="#fff"/><path d="M1 3.3 L10 3.3 L9.4 12 L1.6 12 Z" fill="#fff"/><rect x="3" y="4.6" width="1" height="5.8" fill="#f75444"/><rect x="5" y="4.6" width="1" height="5.8" fill="#f75444"/><rect x="7" y="4.6" width="1" height="5.8" fill="#f75444"/></svg></div>
<div class="cb" style="left:276px;top:523px"></div>
<div class="cell" style="left:304px;top:508px;width:83px">13</div>
<div class="cell" style="left:387px;top:508px;width:654px">不是公租房吧<span class="fw">?</span></div>
<div class="cell" style="left:1041px;top:508px;width:213px">2022-05-17 22:23:30</div>
<div class="cell" style="left:1356px;top:508px;width:78px">阿白</div>
<div class="cell" style="left:1434px;top:508px;width:351px">巴南区 龙洲湾 房屋出租</div>
<div class="a" style="left:1284px;top:525px"><svg width="12" height="12" viewBox="0 0 12 12"><circle cx="6" cy="6" r="6" fill="#18bc9c"/></svg></div>
<div class="a" style="left:1300px;top:508px;line-height:46px;color:#18bc9c">成功</div>
<div class="a" style="left:1814px;top:520px;width:22px;height:22px;background:#18bc9c;border-radius:3px"></div>
<div class="a" style="left:1819px;top:525px"><svg width="12" height="11" viewBox="0 0 12 11"><path d="M9 0.3 L11.7 3 L4.2 10.5 L1.5 7.8 Z" fill="#fff"/><path d="M1.2 8.3 L3.8 10.9 L0 11 Z" fill="#fff"/><path d="M7.6 1.7 L10.3 4.4" stroke="#18bc9c" stroke-width="0.5"/></svg></div>
<div class="a" style="left:1840px;top:520px;width:21px;height:22px;background:#f75444;border-radius:3px"></div>
<div class="a" style="left:1845px;top:525px"><svg width="10" height="11" viewBox="0 0 11 12"><rect x="0" y="1.8" width="11" height="1.5" fill="#fff"/><path d="M3.3 2 L3.8 0 L7.2 0 L7.7 2 L6.6 2 L6.3 1 L4.7 1 L4.4 2 Z" fill="#fff"/><path d="M1 3.3 L10 3.3 L9.4 12 L1.6 12 Z" fill="#fff"/><rect x="3" y="4.6" width="1" height="5.8" fill="#f75444"/><rect x="5" y="4.6" width="1" height="5.8" fill="#f75444"/><rect x="7" y="4.6" width="1" height="5.8" fill="#f75444"/></svg></div>
<div class="cb" style="left:276px;top:570px"></div>
<div class="cell" style="left:304px;top:555px;width:83px">11</div>
<div class="cell" style="left:387px;top:555px;width:654px">平台监督管理唯一联系方式<span class="fw">:</span>个人中心-联系客服</div>
<div class="cell" style="left:1041px;top:555px;width:213px">2022-04-30 23:08:31</div>
<div class="cell" style="left:1356px;top:555px;width:78px">阿白</div>
<div class="cell" style="left:1434px;top:555px;width:351px">线下活动板块内容发布规则</div>
<div class="a" style="left:1284px;top:572px"><svg width="12" height="12" viewBox="0 0 12 12"><circle cx="6" cy="6" r="6" fill="#18bc9c"/></svg></div>
<div class="a" style="left:1300px;top:555px;line-height:46px;color:#18bc9c">成功</div>
<div class="a" style="left:1814px;top:567px;width:22px;height:22px;background:#18bc9c;border-radius:3px"></div>
<div class="a" style="left:1819px;top:572px"><svg width="12" height="11" viewBox="0 0 12 11"><path d="M9 0.3 L11.7 3 L4.2 10.5 L1.5 7.8 Z" fill="#fff"/><path d="M1.2 8.3 L3.8 10.9 L0 11 Z" fill="#fff"/><path d="M7.6 1.7 L10.3 4.4" stroke="#18bc9c" stroke-width="0.5"/></svg></div>
<div class="a" style="left:1840px;top:567px;width:21px;height:22px;background:#f75444;border-radius:3px"></div>
<div class="a" style="left:1845px;top:572px"><svg width="10" height="11" viewBox="0 0 11 12"><rect x="0" y="1.8" width="11" height="1.5" fill="#fff"/><path d="M3.3 2 L3.8 0 L7.2 0 L7.7 2 L6.6 2 L6.3 1 L4.7 1 L4.4 2 Z" fill="#fff"/><path d="M1 3.3 L10 3.3 L9.4 12 L1.6 12 Z" fill="#fff"/><rect x="3" y="4.6" width="1" height="5.8" fill="#f75444"/><rect x="5" y="4.6" width="1" height="5.8" fill="#f75444"/><rect x="7" y="4.6" width="1" height="5.8" fill="#f75444"/></svg></div>
<div class="cb" style="left:276px;top:617px"></div>
<div class="cell" style="left:304px;top:602px;width:83px">10</div>
<div class="cell" style="left:387px;top:602px;width:654px">地址在海棠溪国瑞中心楼上，冲冲冲</div>
<div class="cell" style="left:1041px;top:602px;width:213px">2022-04-30 20:51:01</div>
<div class="cell" style="left:1356px;top:602px;width:78px">阿白</div>
<div class="cell" style="left:1434px;top:602px;width:351px">海棠溪国瑞中心香港冰室158单人餐</div>
<div class="a" style="left:1284px;top:619px"><svg width="12" height="12" viewBox="0 0 12 12"><circle cx="6" cy="6" r="6" fill="#18bc9c"/></svg></div>
<div class="a" style="left:1300px;top:602px;line-height:46px;color:#18bc9c">成功</div>
<div class="a" style="left:1814px;top:614px;width:22px;height:22px;background:#18bc9c;border-radius:3px"></div>
<div class="a" style="left:1819px;top:619px"><svg width="12" height="11" viewBox="0 0 12 11"><path d="M9 0.3 L11.7 3 L4.2 10.5 L1.5 7.8 Z" fill="#fff"/><path d="M1.2 8.3 L3.8 10.9 L0 11 Z" fill="#fff"/><path d="M7.6 1.7 L10.3 4.4" stroke="#18bc9c" stroke-width="0.5"/></svg></div>
<div class="a" style="left:1840px;top:614px;width:21px;height:22px;background:#f75444;border-radius:3px"></div>
<div class="a" style="left:1845px;top:619px"><svg width="10" height="11" viewBox="0 0 11 12"><rect x="0" y="1.8" width="11" height="1.5" fill="#fff"/><path d="M3.3 2 L3.8 0 L7.2 0 L7.7 2 L6.6 2 L6.3 1 L4.7 1 L4.4 2 Z" fill="#fff"/><path d="M1 3.3 L10 3.3 L9.4 12 L1.6 12 Z" fill="#fff"/><rect x="3" y="4.6" width="1" height="5.8" fill="#f75444"/><rect x="5" y="4.6" width="1" height="5.8" fill="#f75444"/><rect x="7" y="4.6" width="1" height="5.8" fill="#f75444"/></svg></div>
<div class="cb" style="left:276px;top:664px"></div>
<div class="cell" style="left:304px;top:649px;width:83px">9</div>
<div class="cell" style="left:387px;top:649px;width:654px">(*°ω°*)/&amp;quot;</div>
<div class="cell" style="left:1041px;top:649px;width:213px">2022-04-30 15:32:47</div>
<div class="cell" style="left:1356px;top:649px;width:78px">阿白</div>
<div class="cell" style="left:1434px;top:649px;width:351px">一路风景</div>
<div class="a" style="left:1284px;top:666px"><svg width="12" height="12" viewBox="0 0 12 12"><circle cx="6" cy="6" r="6" fill="#18bc9c"/></svg></div>
<div class="a" style="left:1300px;top:649px;line-height:46px;color:#18bc9c">成功</div>
<div class="a" style="left:1814px;top:661px;width:22px;height:22px;background:#18bc9c;border-radius:3px"></div>
<div class="a" style="left:1819px;top:666px"><svg width="12" height="11" viewBox="0 0 12 11"><path d="M9 0.3 L11.7 3 L4.2 10.5 L1.5 7.8 Z" fill="#fff"/><path d="M1.2 8.3 L3.8 10.9 L0 11 Z" fill="#fff"/><path d="M7.6 1.7 L10.3 4.4" stroke="#18bc9c" stroke-width="0.5"/></svg></div>
<div class="a" style="left:1840px;top:661px;width:21px;height:22px;background:#f75444;border-radius:3px"></div>
<div class="a" style="left:1845px;top:666px"><svg width="10" height="11" viewBox="0 0 11 12"><rect x="0" y="1.8" width="11" height="1.5" fill="#fff"/><path d="M3.3 2 L3.8 0 L7.2 0 L7.7 2 L6.6 2 L6.3 1 L4.7 1 L4.4 2 Z" fill="#fff"/><path d="M1 3.3 L10 3.3 L9.4 12 L1.6 12 Z" fill="#fff"/><rect x="3" y="4.6" width="1" height="5.8" fill="#f75444"/><rect x="5" y="4.6" width="1" height="5.8" fill="#f75444"/><rect x="7" y="4.6" width="1" height="5.8" fill="#f75444"/></svg></div>
<div class="a" style="left:260px;top:708px;line-height:32px;white-space:nowrap">显示第 21 到第 30 条记录，总共 30 条记录 每页显示</div>
<div class="a" style="left:591px;top:708px;width:52px;height:32px;border:1px solid #ddd;border-radius:3px;background:#f4f4f4"></div>
<div class="a" style="left:605px;top:708px;line-height:32px">10</div>
<div class="a" style="left:622px;top:721px"><svg width="8" height="5" viewBox="0 0 8 5"><path d="M0 4.5 L8 4.5 L4 0.3 Z" fill="#333"/></svg></div>
<div class="a" style="left:647px;top:708px;line-height:32px;white-space:nowrap">条记录</div>
<div class="a pg" style="left:1545px;width:68px;border-left:1px solid #ddd;border-radius:3px 0 0 3px">上一页</div>
<div class="a pg" style="left:1613px;width:32px">1</div>
<div class="a pg" style="left:1645px;width:32px">2</div>
<div class="a pg" style="left:1677px;width:34px;background:#444c69;color:#fff;border-color:#444c69">3</div>
<div class="a pg" style="left:1711px;width:67px;border-radius:0 3px 3px 0">下一页</div>
<div class="a" style="left:1783px;top:706px;width:50px;height:33px;border:1px solid #ccd3db;background:#fff"></div>
<div class="a" style="left:1838px;top:707px;width:52px;height:33px;line-height:31px;text-align:center;border:1px solid #ddd;border-radius:3px;background:#f4f4f4;color:#333">跳转</div>
</body></html>
